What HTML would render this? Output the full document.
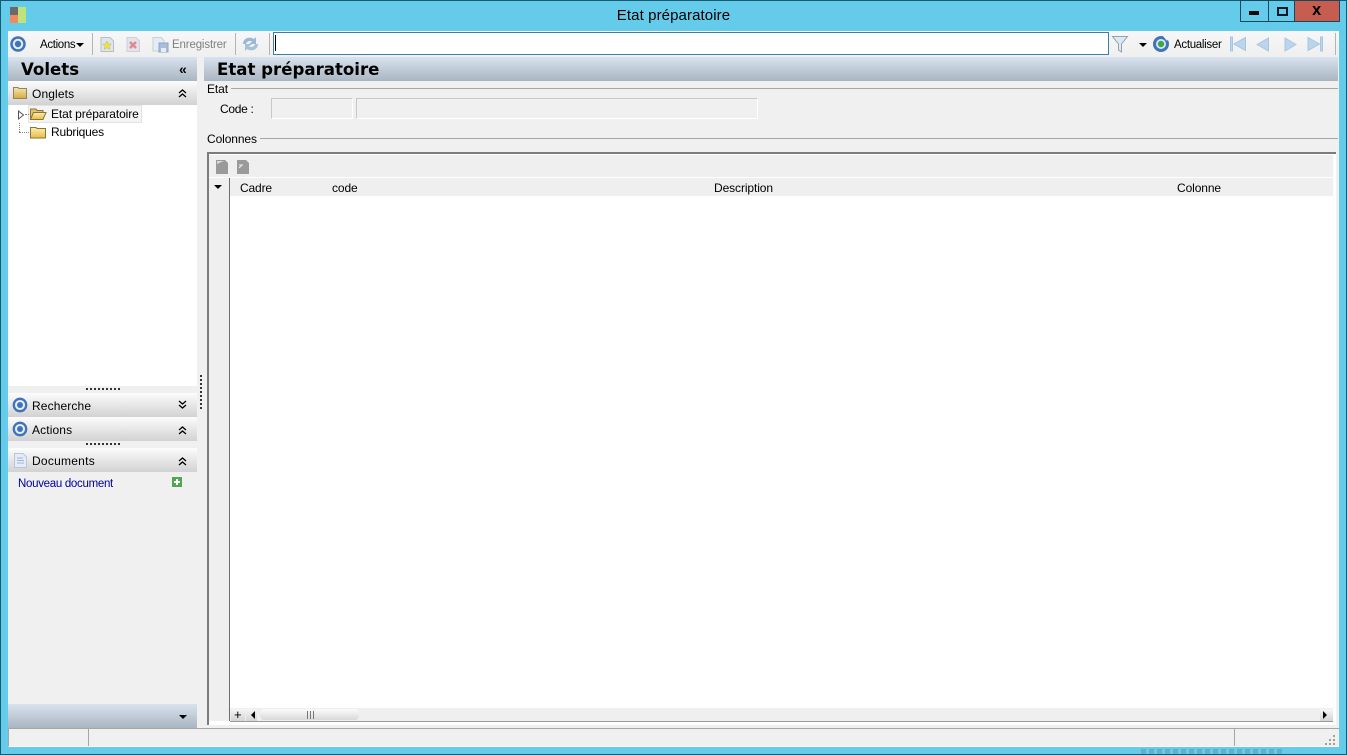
<!DOCTYPE html>
<html><head><meta charset="utf-8"><style>
html,body{margin:0;padding:0;width:1347px;height:755px;overflow:hidden;background:#65cbeb}
body{position:relative;font-family:"Liberation Sans",sans-serif;font-size:12px;color:#000}
.a{position:absolute}
.t{position:absolute;white-space:nowrap;line-height:14px;letter-spacing:-.1px}
.h{font-family:"DejaVu Sans",sans-serif;font-size:16.6px;line-height:19px;font-weight:bold;letter-spacing:0}
.s{letter-spacing:.12px}
.bar{position:absolute;background:linear-gradient(#d8e3ef,#a9b5c0)}
.sec{position:absolute;left:8px;width:189px;height:24px;background:linear-gradient(#fcfcfc,#d2d2d2)}
svg{position:absolute;overflow:visible}
</style></head><body>
<svg width="0" height="0" style="left:0;top:0"><defs>
<linearGradient id="fo" x1="0" y1="0" x2="0" y2="1"><stop offset="0" stop-color="#f6e6ae"/><stop offset="1" stop-color="#d9a93f"/></linearGradient>
<linearGradient id="fy" x1="0" y1="0" x2="0" y2="1"><stop offset="0" stop-color="#fbeeb0"/><stop offset="1" stop-color="#e9bc45"/></linearGradient>
</defs></svg>
<div class="a" style="left:0;top:0;width:1347px;height:755px;box-sizing:border-box;border:1px solid #17596e"></div>
<div class="a" style="left:1141px;top:749px;width:144px;height:5px;background:repeating-linear-gradient(90deg,#5fb0ca 0 5px,#65cbeb 5px 8px)"></div>
<!-- title -->
<div class="a" style="left:10px;top:7px;width:8px;height:8px;background:#6a6a6a"></div>
<div class="a" style="left:18px;top:7px;width:8px;height:16px;background:#bfe37c"></div>
<div class="a" style="left:10px;top:15px;width:8px;height:8px;background:#f2895a"></div>
<div class="t" style="left:0;width:1347px;text-align:center;top:9px;font-size:15px;letter-spacing:.1px">Etat préparatoire</div>
<!-- window buttons -->
<div class="a" style="left:1240px;top:0;width:100px;height:22px;box-sizing:border-box;border:1px solid #17485a;background:#65cbeb"></div>
<div class="a" style="left:1268px;top:0;width:1px;height:21px;background:#17485a"></div>
<div class="a" style="left:1294px;top:1px;width:45px;height:20px;background:#c75c51;border-left:1px solid #17485a;box-sizing:border-box"></div>
<div class="a" style="left:1249px;top:11px;width:10px;height:4px;background:#0a0a0a"></div>
<div class="a" style="left:1277px;top:7px;width:11px;height:9px;box-sizing:border-box;border:2px solid #0a1a24"></div>
<div class="t" style="left:1312px;top:4px;font-family:'DejaVu Sans',sans-serif;font-size:12px;font-weight:bold;letter-spacing:0">X</div>
<!-- main client -->
<div class="a" style="left:8px;top:31px;width:1331px;height:716px;background:#f0f0f0"></div>
<!-- toolbar -->
<div class="a" style="left:8px;top:31px;width:1331px;height:26px;background:linear-gradient(#f7f7f7,#efefef)"></div>
<svg style="left:10px;top:36px" width="17" height="17"><circle cx="8" cy="8" r="6.500" fill="#e6eef8" stroke="#3f73bb" stroke-width="2.500"/><circle cx="8" cy="8" r="3.200" fill="#3f73bb"/></svg>
<div class="t" style="left:40px;top:38px;font-size:11.500px;letter-spacing:-.35px">Actions</div>
<svg style="left:76px;top:43px" width="9" height="5"><path d="M0 0H8L4 4Z" fill="#000"/></svg>
<div class="a" style="left:92px;top:33px;width:1px;height:22px;background:#b4b4b4"></div>
<svg style="left:100px;top:37px" width="14" height="15"><path d="M1 .5H10L13.500 4V14.500H1Z" fill="#dde5ef" stroke="#b5bfcc"/><path d="M7 4L8.500 7H11.500L9 9.500L10 12.500L7 10.800L4 12.500L5 9.500L2.500 7H5.500Z" fill="#ece04c" stroke="#d2b64a" stroke-width=".5"/></svg>
<svg style="left:126px;top:37px" width="14" height="15"><path d="M1 .5H10L13.500 4V14.500H1Z" fill="#e3e3ea" stroke="#cfcfd8"/><path d="M4 5L10 11M10 5L4 11" stroke="#dc8a90" stroke-width="2.500"/></svg>
<svg style="left:152px;top:37px" width="17" height="16"><path d="M1 .5H9L12 3.500V14H1Z" fill="#e6ecf4" stroke="#c5cfdc"/><rect x="7" y="6" width="9" height="9" fill="#a9bdd8" stroke="#8da5c7"/><rect x="9" y="11" width="5" height="4" fill="#e6ecf4"/></svg>
<div class="t" style="left:172px;top:38px;color:#7f7f7f;font-size:11.500px;letter-spacing:-.15px">Enregistrer</div>
<div class="a" style="left:235px;top:33px;width:1px;height:22px;background:#b4b4b4"></div>
<svg style="left:242px;top:36px" width="17" height="16"><path d="M1 8C1 2 8 0 12 3L14 1V8H7L10 5.500C8 4.500 5 5 4 8Z" fill="#9db8d6"/><path d="M16 8C16 14 9 16 5 13L3 15V8H10L7 10.500C9 11.500 12 11 13 8Z" fill="#a9c0da"/></svg>
<div class="a" style="left:269px;top:33px;width:1px;height:22px;background:#b4b4b4"></div>
<div class="a" style="left:273px;top:32px;width:836px;height:23px;box-sizing:border-box;background:#fff;border:1px solid #3c7fa5"></div>
<div class="a" style="left:275px;top:35px;width:1px;height:16px;background:#000"></div>
<svg style="left:1112px;top:36px" width="17" height="17"><path d="M.5.500H15.500L9.500 8V16L6.500 14V8Z" fill="#dfe8f0" stroke="#8fa3b5"/></svg>
<svg style="left:1139px;top:43px" width="9" height="5"><path d="M0 0H8L4 4Z" fill="#000"/></svg>
<svg style="left:1152px;top:35px" width="18" height="18"><circle cx="9" cy="9" r="6.500" fill="#dce8f4" stroke="#3f73bb" stroke-width="3"/><circle cx="9" cy="9" r="3.200" fill="#3fa648"/><path d="M11 1L17 2L15 6Z" fill="#f4f4f4"/></svg>
<div class="t" style="left:1174px;top:38px;font-size:11.500px;letter-spacing:-.3px">Actualiser</div>
<svg style="left:1230px;top:36px" width="105" height="16" fill="#bcd5ee" stroke="#a9c5e2"><path d="M.5 1V15H2.500V1ZM15.500 1.500V14.500L4 8Z"/><path d="M38.500 2V15L27 8.500Z"/><path d="M55 2V15L66 8.500Z"/><path d="M78 1.500V14.500L89.500 8ZM90.500 1V15H92.500V1Z"/></svg>
<div class="a" style="left:1335px;top:33px;width:1px;height:22px;background:#b4b4b4"></div>
<!-- left panel -->
<div class="bar" style="left:8px;top:57px;width:189px;height:24px"></div>
<div class="t h" style="left:21px;top:60px">Volets</div>
<div class="t" style="left:179px;top:62px;font-size:14px;font-weight:bold;line-height:14px">«</div>
<div class="sec" style="top:81px"></div>
<svg style="left:13px;top:86px" width="14" height="13"><path d="M.5 1.500H5L6 2.500H13.500V12.500H.5Z" fill="url(#fo)" stroke="#8f8468"/></svg>
<div class="t s" style="left:32px;top:87px">Onglets</div>
<svg style="left:178px;top:89px" width="9" height="9" fill="none" stroke="#000" stroke-width="1.300"><path d="M1 4L4.500 1L8 4M1 8L4.500 5L8 8"/></svg>
<div class="a" style="left:8px;top:105px;width:189px;height:281px;background:#fff"></div>
<div class="a" style="left:28px;top:105px;width:114px;height:18px;box-sizing:border-box;background:#f4f4f4;border:1px solid #e3e3e3"></div>
<svg style="left:17px;top:110px" width="8" height="10"><path d="M1.500 1V9L6.500 5Z" fill="#fff" stroke="#555"/></svg>
<div class="a" style="left:19px;top:123px;width:0;height:9px;border-left:1px dotted #888"></div>
<div class="a" style="left:19px;top:132px;width:10px;height:0;border-top:1px dotted #888"></div>
<div class="a" style="left:25px;top:114px;width:4px;height:0;border-top:1px dotted #888"></div>
<svg style="left:30px;top:107px" width="17" height="14"><path d="M.5 2H6L7 3.500H13V6H3.500L.5 12.500Z" fill="#e3c271" stroke="#8a7436"/><path d="M3.500 5.500H16L13 12.500H.5Z" fill="url(#fy)" stroke="#8a7436"/></svg>
<svg style="left:30px;top:126px" width="16" height="13"><path d="M.5 1.500H6L7 2.500H15.500V12H.5Z" fill="url(#fy)" stroke="#8a7436"/></svg>
<div class="t" style="left:51px;top:107px">Etat préparatoire</div>
<div class="t" style="left:51px;top:125px;letter-spacing:-.2px">Rubriques</div>
<div class="a" style="left:86px;top:388px;width:34px;height:0;border-top:2px dotted #333"></div>
<div class="a" style="left:200px;top:375px;width:0;height:34px;border-left:2px dotted #333"></div>
<div class="sec" style="top:393px"></div>
<svg style="left:12px;top:397px" width="16" height="16"><circle cx="8" cy="8" r="6.200" fill="#e6eef8" stroke="#3f73bb" stroke-width="2.300"/><circle cx="8" cy="8" r="3" fill="#3f73bb"/></svg>
<div class="t s" style="left:32px;top:399px">Recherche</div>
<svg style="left:178px;top:400px" width="9" height="9" fill="none" stroke="#000" stroke-width="1.300"><path d="M1 1L4.500 4L8 1M1 5L4.500 8L8 5"/></svg>
<div class="sec" style="top:417px"></div>
<svg style="left:12px;top:421px" width="16" height="16"><circle cx="8" cy="8" r="6.200" fill="#e6eef8" stroke="#3f73bb" stroke-width="2.300"/><circle cx="8" cy="8" r="3" fill="#3f73bb"/></svg>
<div class="t s" style="left:32px;top:423px">Actions</div>
<svg style="left:178px;top:426px" width="9" height="9" fill="none" stroke="#000" stroke-width="1.300"><path d="M1 4L4.500 1L8 4M1 8L4.500 5L8 8"/></svg>
<div class="a" style="left:86px;top:443px;width:34px;height:0;border-top:2px dotted #333"></div>
<div class="sec" style="top:448px"></div>
<svg style="left:14px;top:453px" width="13" height="15"><path d="M.5.500H9L12.500 4V14.500H.5Z" fill="#e6ecf7" stroke="#b8c6dc"/><path d="M3 5H9M3 7.500H10M3 10H10" stroke="#9fb4d4"/></svg>
<div class="t" style="left:32px;top:454px;letter-spacing:.25px">Documents</div>
<svg style="left:178px;top:457px" width="9" height="9" fill="none" stroke="#000" stroke-width="1.300"><path d="M1 4L4.500 1L8 4M1 8L4.500 5L8 8"/></svg>
<div class="t" style="left:18px;top:477px;color:#00009c;font-size:11.500px;letter-spacing:-.3px">Nouveau document</div>
<svg style="left:172px;top:477px" width="10" height="10"><rect width="10" height="10" fill="#53a653"/><path d="M5 2V8M2 5H8" stroke="#fff" stroke-width="2"/></svg>
<div class="bar" style="left:8px;top:704px;width:189px;height:24px"></div>
<svg style="left:179px;top:715px" width="9" height="5"><path d="M0 0H8L4 4Z" fill="#000"/></svg>
<!-- right header -->
<div class="bar" style="left:204px;top:57px;width:1134px;height:24px"></div>
<div class="t h" style="left:217px;top:60px">Etat préparatoire</div>
<div class="t" style="left:207px;top:82px">Etat</div>
<div class="a" style="left:231px;top:88px;width:1107px;height:1px;background:#a6a6a6"></div>
<div class="t" style="left:220px;top:102px;letter-spacing:-.3px">Code&nbsp;:</div>
<div class="a" style="left:271px;top:98px;width:82px;height:21px;box-sizing:border-box;border:1px solid #c8c8c8;border-right-color:#fff;border-bottom-color:#fff"></div>
<div class="a" style="left:356px;top:98px;width:402px;height:21px;box-sizing:border-box;border:1px solid #c8c8c8;border-right-color:#fff;border-bottom-color:#fff"></div>
<div class="t" style="left:207px;top:132px">Colonnes</div>
<div class="a" style="left:260px;top:138px;width:1078px;height:1px;background:#a6a6a6"></div>
<!-- grid -->
<div class="a" style="left:207px;top:152px;width:1129px;height:2px;background:#7c7c7c"></div>
<div class="a" style="left:207px;top:152px;width:2px;height:573px;background:#7c7c7c"></div>
<div class="a" style="left:209px;top:154px;width:1127px;height:571px;background:#fff"></div>
<div class="a" style="left:209px;top:155px;width:1124px;height:22px;background:#efefef"></div>
<svg style="left:216px;top:159px" width="36" height="16"><path d="M0 1H9L12 4V15H0Z" fill="#9a9a9a"/><path d="M1 2H8L1 5Z" fill="#d8d8d8"/><path d="M21 1H30L33 4V15H21Z" fill="#9a9a9a"/><path d="M23 6H27M23 9L26 6" stroke="#eee"/></svg>
<div class="a" style="left:209px;top:178px;width:1124px;height:18px;background:#efefef"></div>
<div class="a" style="left:209px;top:178px;width:20px;height:543px;background:#efefef"></div>
<div class="a" style="left:229px;top:178px;width:1px;height:543px;background:#6e6e6e"></div>
<svg style="left:214px;top:185px" width="9" height="5"><path d="M0 0H8L4 4Z" fill="#000"/></svg>
<div class="t" style="left:240px;top:181px;letter-spacing:-.15px">Cadre</div>
<div class="t" style="left:332px;top:181px">code</div>
<div class="t" style="left:714px;top:181px">Description</div>
<div class="t" style="left:1177px;top:181px">Colonne</div>
<!-- scrollbar -->
<div class="a" style="left:230px;top:708px;width:1103px;height:13px;background:#efefef;border-bottom:1px solid #9a9a9a"></div>
<div class="a" style="left:231px;top:709px;width:14px;height:12px;background:linear-gradient(#f6f6f6,#d4d4d4)"></div>
<div class="t" style="left:234px;top:708px;font-size:13px">+</div>
<div class="a" style="left:246px;top:709px;width:11px;height:12px;background:linear-gradient(#f6f6f6,#d4d4d4)"></div>
<svg style="left:250px;top:711px" width="6" height="9"><path d="M5 0V8L1 4Z" fill="#000"/></svg>
<div class="a" style="left:260px;top:709px;width:99px;height:11px;border-radius:4px;background:linear-gradient(#fbfbfb,#d8d8d8)"></div>
<div class="a" style="left:307px;top:711px;width:7px;height:8px;background:repeating-linear-gradient(90deg,#777 0 1px,transparent 1px 3px)"></div>
<div class="a" style="left:1320px;top:709px;width:13px;height:12px;background:linear-gradient(#f6f6f6,#d4d4d4)"></div>
<svg style="left:1322px;top:711px" width="6" height="9"><path d="M1 0V8L5 4Z" fill="#000"/></svg>
<!-- status bar -->
<div class="a" style="left:8px;top:728px;width:1331px;height:19px;box-sizing:border-box;border-top:1px solid #a6a6a6;border-left:1px solid #a6a6a6;border-bottom:1px solid #fff;background:#f0f0f0"></div>
<div class="a" style="left:88px;top:729px;width:1px;height:17px;background:#a6a6a6"></div>
<div class="a" style="left:1234px;top:729px;width:1px;height:17px;background:#a6a6a6"></div>
<svg style="left:1325px;top:735px" width="11" height="11" fill="#a0a0a0"><rect x="8" y="0" width="2" height="2"/><rect x="4" y="4" width="2" height="2"/><rect x="8" y="4" width="2" height="2"/><rect x="0" y="8" width="2" height="2"/><rect x="4" y="8" width="2" height="2"/><rect x="8" y="8" width="2" height="2"/></svg>
</body></html>
